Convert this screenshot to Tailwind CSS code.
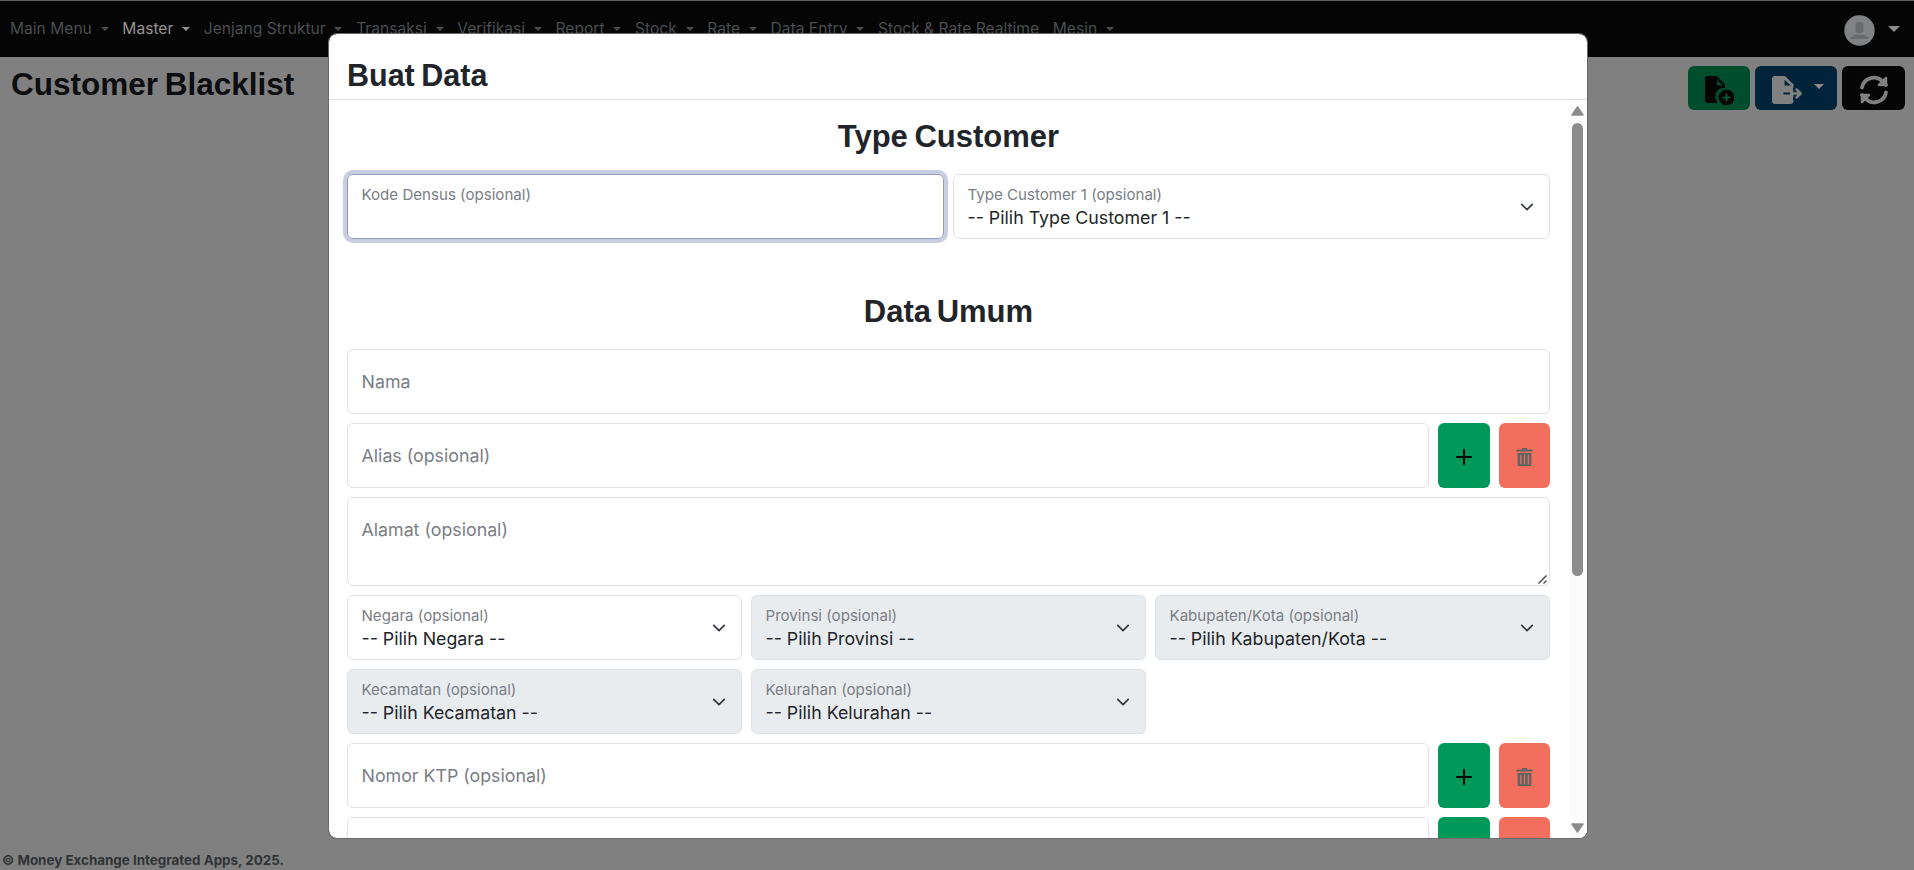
<!DOCTYPE html>
<html lang="id">
<head>
    <meta charset="UTF-8">
    <title>Customer Blacklist</title>
    <script src="https://cdn.jsdelivr.net/npm/@tailwindcss/browser@4"></script>
</head>
<body class="h-[870px] overflow-hidden bg-[#808080] font-['Inter',sans-serif] text-[#212529]">
    <!-- Icons -->
    <svg class="hidden">
        <symbol id="caret" viewBox="0 0 8 4"><path d="M0 0h8L4 4z" fill="currentColor"/></symbol>
        <symbol id="chevron" viewBox="0 0 16 16"><path d="m2 5 6 6 6-6" fill="none" stroke="#343a40" stroke-width="2" stroke-linecap="round" stroke-linejoin="round"/></symbol>
        <symbol id="plus" viewBox="0 0 16 16"><path d="M8 1v14M1 8h14" fill="none" stroke="#050505" stroke-width="2.1" stroke-linecap="round"/></symbol>
        <symbol id="trash" viewBox="0 0 17 20">
            <path d="M5 2.500 6.500 1h4L12 2.500h4.500v2H.5v-2zM1.500 6h14v12.200q0 .8-.8.8H2.300q-.8 0-.8-.8z" fill="#646464"/>
            <path d="M4.700 8v9M8.500 8v9M12.300 8v9" stroke="#f36f5d" stroke-width="1.100"/>
        </symbol>
    </svg>

    <div class="flex h-full flex-col">
        <!-- Navbar -->
        <nav class="flex h-[57px] items-center justify-between border-t border-[#5f5f5f] bg-[#050505] pr-[14px] pl-[10px] text-[#494d50]">
            <ul class="-mt-px flex gap-[13.7px] text-[15.6px] leading-6 whitespace-nowrap">
                <li class="flex items-center gap-[8.8px]">Main Menu <svg class="h-1 w-2"><use href="#caret"/></svg></li>
                <li class="flex items-center gap-[8.8px] text-[#949494]">Master <svg class="h-1 w-2"><use href="#caret"/></svg></li>
                <li class="flex items-center gap-[8.8px]">Jenjang Struktur <svg class="h-1 w-2"><use href="#caret"/></svg></li>
                <li class="flex items-center gap-[8.8px]">Transaksi <svg class="h-1 w-2"><use href="#caret"/></svg></li>
                <li class="flex items-center gap-[8.8px]">Verifikasi <svg class="h-1 w-2"><use href="#caret"/></svg></li>
                <li class="flex items-center gap-[8.8px]">Report <svg class="h-1 w-2"><use href="#caret"/></svg></li>
                <li class="flex items-center gap-[8.8px]">Stock <svg class="h-1 w-2"><use href="#caret"/></svg></li>
                <li class="flex items-center gap-[8.8px]">Rate <svg class="h-1 w-2"><use href="#caret"/></svg></li>
                <li class="flex items-center gap-[8.8px]">Data Entry <svg class="h-1 w-2"><use href="#caret"/></svg></li>
                <li>Stock &amp; Rate Realtime</li>
                <li class="flex items-center gap-[8.8px]">Mesin <svg class="h-1 w-2"><use href="#caret"/></svg></li>
            </ul>
            <div class="flex items-center gap-[13px] text-[#8c8c8c]">
                <svg class="mt-[3px] size-[31px]" viewBox="0 0 31 31">
                    <circle cx="15.500" cy="15.500" r="15.200" fill="#808285"/>
                    <rect x="11.500" y="7" width="8" height="11" rx="3" fill="#686b6e"/>
                    <path d="M6.500 24q0-4.500 9-4.500t9 4.500z" fill="#686b6e"/>
                </svg>
                <svg class="h-[6px] w-3"><use href="#caret"/></svg>
            </div>
        </nav>

        <!-- Page header -->
        <header class="flex justify-between pt-[9px] pr-[9px] pl-[11px]">
            <h1 class="font-['Liberation_Sans',sans-serif] text-[31.5px] leading-[37px] font-bold text-[#0b0d0e] [word-spacing:-2px]">Customer Blacklist</h1>
            <div class="flex gap-[5px]">
                <button class="flex h-11 w-[62px] items-center justify-center rounded-md bg-[#004d2d]">
                    <svg class="mt-1 size-[30px]" viewBox="0 0 30 30">
                        <path d="M4 1h8.500L21 9.500V13a8.500 8.500 0 0 0-8 13.500V28H4q-3 0-3-3V4q0-3 3-3z" fill="#050505"/>
                        <path d="M13 5v5.500h6z" fill="#004d2d"/>
                        <circle cx="22.500" cy="22.500" r="7.800" fill="#050505"/>
                        <path d="M22.500 18.500v8M18.500 22.500h8" stroke="#00693d" stroke-width="1.500"/>
                    </svg>
                </button>
                <button class="flex h-11 w-[82px] items-center justify-center gap-[11px] rounded-md bg-[#02243a] pl-[3px] text-[#8c8c8c]">
                    <svg class="mt-1 h-7 w-[31px]" viewBox="0 0 31 28">
                        <path d="M3 0h10l8.500 8.500V25q0 3-3 3H3q-3 0-3-3V3q0-3 3-3z" fill="#808080"/>
                        <path d="M12.500 4v5.500H19z" fill="#02243a"/>
                        <path d="M11.500 17.500H18M22 11.500v3M22 21v3" stroke="#02243a" stroke-width="2"/>
                        <path d="M20 17.500h8M24.500 13.500l4.200 4-4.200 4" fill="none" stroke="#808080" stroke-width="2.500" stroke-linecap="round" stroke-linejoin="round"/>
                    </svg>
                    <svg class="mb-1 h-[5px] w-[10px]"><use href="#caret"/></svg>
                </button>
                <button class="flex h-11 w-[63px] items-center justify-center rounded-md bg-[#050505]">
                    <svg class="mt-1 size-[30px]" viewBox="0 0 30 30" fill="none" stroke="#808080" stroke-width="3.800" stroke-linecap="round" stroke-linejoin="round">
                        <path d="M3 12.500A12 12 0 0 1 24 7l3 3"/>
                        <path d="M27 3v7h-7z" fill="#808080" stroke-width="2.500"/>
                        <path d="M27 17.500A12 12 0 0 1 6 23l-3-3"/>
                        <path d="M3 27v-7h7z" fill="#808080" stroke-width="2.500"/>
                    </svg>
                </button>
            </div>
        </header>

        <footer class="mt-auto pl-[2px] text-[13.4px] leading-[19px] font-bold text-[#303436]">&copy; Money Exchange Integrated Apps, 2025.</footer>
    </div>

    <!-- Modal -->
    <div class="absolute top-[33px] left-[328px] flex h-[806px] w-[1260px] flex-col overflow-hidden rounded-[9px] border border-[#6a6a6a] bg-white bg-clip-padding">
        <div class="h-[66px] shrink-0 border-b border-[#dee2e6] pt-[24px] pl-[18px]">
            <h2 class="font-['Liberation_Sans',sans-serif] text-[30.5px] leading-[35px] font-bold [word-spacing:-2px]">Buat Data</h2>
        </div>
        <div class="flex min-h-0 flex-1">
            <div class="flex flex-1 flex-col gap-[9px] overflow-hidden pt-[16px] pr-[19px] pl-[18px] text-[17.8px] leading-[26px]">
                <h3 class="mb-[10px] h-[39px] shrink-0 text-center font-['Liberation_Sans',sans-serif] text-[31px] leading-[41px] font-bold [word-spacing:-2px]">Type Customer</h3>
                <div class="grid shrink-0 grid-cols-2 gap-[9px]">
                    <div class="h-[65px] rounded-md border border-[#939bc0] px-[13.5px] pt-[8px] text-[15.1px] leading-6 text-[#797e85] ring-4 ring-[#c9cde0]">Kode Densus (opsional)</div>
                    <div class="flex h-[65px] items-center justify-between rounded-md border border-[#dee2e6] pr-[15px] pl-[13.5px]">
                        <div>
                            <div class="text-[15.1px] leading-[22px] text-[#797e85]">Type Customer 1 (opsional)</div>
                            <div class="leading-6">-- Pilih Type Customer 1 --</div>
                        </div>
                        <svg class="size-[14px]"><use href="#chevron"/></svg>
                    </div>
                </div>

                <h3 class="mt-[43px] mb-[10px] h-[39px] shrink-0 text-center font-['Liberation_Sans',sans-serif] text-[31px] leading-[41px] font-bold [word-spacing:-3px]">Data Umum</h3>
                <div class="flex h-[65px] shrink-0 items-center rounded-md border border-[#dee2e6] px-[13.5px] text-[#797e85]">Nama</div>
                <div class="flex h-[65px] shrink-0 gap-[9px]">
                    <div class="flex flex-1 items-center rounded-md border border-[#dee2e6] px-[13.5px] text-[#797e85]">Alias (opsional)</div>
                    <button class="flex w-[52px] items-center justify-center rounded-md bg-[#009959]"><svg class="mt-[3px] size-4"><use href="#plus"/></svg></button>
                    <button class="flex w-[51px] items-center justify-center rounded-md bg-[#f36f5d]"><svg class="mt-[2px] h-5 w-[17px]"><use href="#trash"/></svg></button>
                </div>
                <div class="relative h-[89px] shrink-0 rounded-md border border-[#dee2e6] px-[13.5px] pt-[19px] text-[#797e85]">
                    Alamat (opsional)
                    <svg class="absolute right-[2px] bottom-[1px] size-[9px]" viewBox="0 0 9 9"><path d="M.5 8.500l8-8M5.500 8.500l3-3" stroke="#444" stroke-width="1.400"/></svg>
                </div>
                <div class="grid shrink-0 grid-cols-3 gap-[9px]">
                    <div class="flex h-[65px] items-center justify-between rounded-md border border-[#dee2e6] pr-[15px] pl-[13.5px]">
                        <div>
                            <div class="text-[15.1px] leading-[22px] text-[#797e85]">Negara (opsional)</div>
                            <div class="leading-6">-- Pilih Negara --</div>
                        </div>
                        <svg class="size-[14px]"><use href="#chevron"/></svg>
                    </div>
                    <div class="flex h-[65px] items-center justify-between rounded-md border border-[#dee2e6] bg-[#e9ecef] pr-[15px] pl-[13.5px]">
                        <div>
                            <div class="text-[15.1px] leading-[22px] text-[#797e85]">Provinsi (opsional)</div>
                            <div class="leading-6">-- Pilih Provinsi --</div>
                        </div>
                        <svg class="size-[14px]"><use href="#chevron"/></svg>
                    </div>
                    <div class="flex h-[65px] items-center justify-between rounded-md border border-[#dee2e6] bg-[#e9ecef] pr-[15px] pl-[13.5px]">
                        <div>
                            <div class="text-[15.1px] leading-[22px] text-[#797e85]">Kabupaten/Kota (opsional)</div>
                            <div class="leading-6">-- Pilih Kabupaten/Kota --</div>
                        </div>
                        <svg class="size-[14px]"><use href="#chevron"/></svg>
                    </div>
                    <div class="flex h-[65px] items-center justify-between rounded-md border border-[#dee2e6] bg-[#e9ecef] pr-[15px] pl-[13.5px]">
                        <div>
                            <div class="text-[15.1px] leading-[22px] text-[#797e85]">Kecamatan (opsional)</div>
                            <div class="leading-6">-- Pilih Kecamatan --</div>
                        </div>
                        <svg class="size-[14px]"><use href="#chevron"/></svg>
                    </div>
                    <div class="flex h-[65px] items-center justify-between rounded-md border border-[#dee2e6] bg-[#e9ecef] pr-[15px] pl-[13.5px]">
                        <div>
                            <div class="text-[15.1px] leading-[22px] text-[#797e85]">Kelurahan (opsional)</div>
                            <div class="leading-6">-- Pilih Kelurahan --</div>
                        </div>
                        <svg class="size-[14px]"><use href="#chevron"/></svg>
                    </div>
                </div>
                <div class="flex h-[65px] shrink-0 gap-[9px]">
                    <div class="flex flex-1 items-center rounded-md border border-[#dee2e6] px-[13.5px] text-[#797e85]">Nomor KTP (opsional)</div>
                    <button class="flex w-[52px] items-center justify-center rounded-md bg-[#009959]"><svg class="mt-[3px] size-4"><use href="#plus"/></svg></button>
                    <button class="flex w-[51px] items-center justify-center rounded-md bg-[#f36f5d]"><svg class="mt-[2px] h-5 w-[17px]"><use href="#trash"/></svg></button>
                </div>
                <div class="flex h-[65px] shrink-0 gap-[9px]">
                    <div class="flex-1 rounded-md border border-[#dee2e6]"></div>
                    <button class="w-[52px] rounded-md bg-[#009959]"></button>
                    <button class="w-[51px] rounded-md bg-[#f36f5d]"></button>
                </div>
            </div>

            <!-- Scrollbar -->
            <div class="flex w-[18px] flex-col items-center bg-[#fcfcfc] pt-[6px] pr-px pb-[5px]">
                <svg class="h-[10px] w-[13px]" viewBox="0 0 13 10"><path d="M6.500 1 12 9H1z" fill="#8b8c8b" stroke="#8b8c8b" stroke-width="1.500" stroke-linejoin="round"/></svg>
                <div class="mt-[7px] h-[453px] w-[11px] rounded-full bg-[#8b8c8b]"></div>
                <svg class="mt-auto h-[10px] w-[13px]" viewBox="0 0 13 10"><path d="M6.500 9 12 1H1z" fill="#8b8c8b" stroke="#8b8c8b" stroke-width="1.500" stroke-linejoin="round"/></svg>
            </div>
        </div>
    </div>
</body>
</html>
